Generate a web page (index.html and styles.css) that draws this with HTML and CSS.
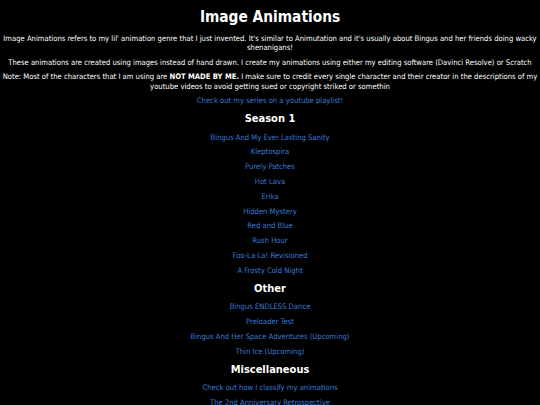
FILE: index.html
```html
<!DOCTYPE html>
<html>
<head>
<meta charset="utf-8">
<link rel="stylesheet" href="styles.css">
</head>
<body>
<main class="page">
  <h1 class="title">Image Animations</h1>
  <p class="text">Image Animations refers to my lil' animation genre that I just invented. It's similar to Animutation and it's usually about Bingus and her friends doing wacky shenanigans!</p>
  <p class="text">These animations are created using images instead of hand drawn. I create my animations using either my editing software (Davinci Resolve) or Scratch</p>
  <p class="text">Note: Most of the characters that I am using are <b>NOT MADE BY ME.</b> I make sure to credit every single character and their creator in the descriptions of my youtube videos to avoid getting sued or copyright striked or somethin</p>
  <p class="text"><a class="link" href="#">Check out my series on a youtube playlist!</a></p>
  <h2 class="heading">Season 1</h2>
  <ul class="list">
    <li><a class="link" href="#">Bingus And My Ever Lasting Sanity</a></li>
    <li><a class="link" href="#">Kleptospira</a></li>
    <li><a class="link" href="#">Purely Patches</a></li>
    <li><a class="link" href="#">Hot Lava</a></li>
    <li><a class="link" href="#">Erika</a></li>
    <li><a class="link" href="#">Hidden Mystery</a></li>
    <li><a class="link" href="#">Red and Blue</a></li>
    <li><a class="link" href="#">Rush Hour</a></li>
    <li><a class="link" href="#">Foo-La-La! Revisioned</a></li>
    <li><a class="link" href="#">A Frosty Cold Night</a></li>
  </ul>
  <h2 class="heading">Other</h2>
  <ul class="list">
    <li><a class="link" href="#">Bingus ENDLESS Dance</a></li>
    <li><a class="link" href="#">Preloader Test</a></li>
    <li><a class="link" href="#">Bingus And Her Space Adventures (Upcoming)</a></li>
    <li><a class="link" href="#">Thin Ice (Upcoming)</a></li>
  </ul>
  <h2 class="heading">Miscellaneous</h2>
  <ul class="list">
    <li><a class="link" href="#">Check out how I classify my animations</a></li>
    <li><a class="link" href="#">The 2nd Anniversary Retrospective</a></li>
  </ul>
</main>
</body>
</html>
```
FILE: styles.css
```css
html, body {
  margin: 0;
  padding: 0;
  background: #000;
}
.page {
  font-family: "DejaVu Sans Condensed", "DejaVu Sans", Verdana, sans-serif;
  font-stretch: condensed;
  color: #fff;
  text-align: center;
  font-size: 7.6px;
  line-height: 9.4px;
  padding: 0 2px;
}
.title {
  font-size: 15.3px;
  line-height: 18px;
  font-weight: bold;
  margin: 0;
  padding: 8px 0 8px;
}
.text {
  margin: 0 0 5px;
}
.heading {
  font-size: 11px;
  line-height: 14px;
  font-weight: bold;
  margin: 7px 0 6.2px;
}
.list {
  list-style: none;
  margin: 0;
  padding: 0;
}
.list li {
  margin: 0 0 5.4px;
}
.link {
  color: #3a7bd5;
  text-decoration: none;
}
```
